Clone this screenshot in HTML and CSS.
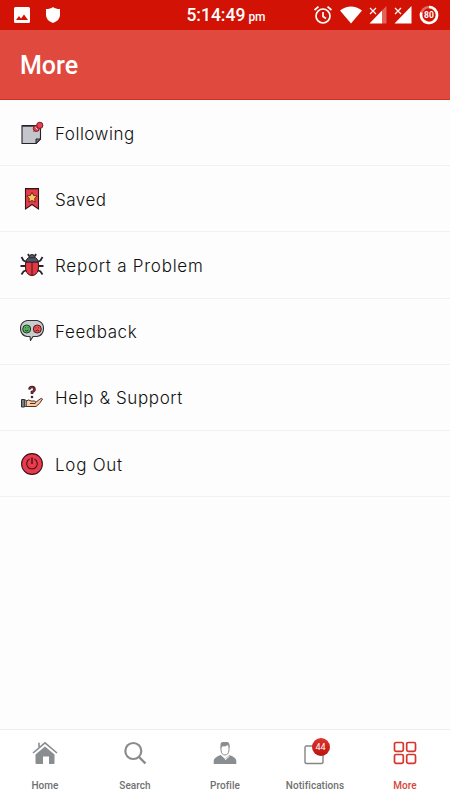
FILE: index.html
```
<!DOCTYPE html>
<html lang="en">
<head>
  <meta charset="UTF-8" />
  <title>More</title>
  <link rel="stylesheet" href="styles.css">
</head>
<body>
  <div class="status-bar">
    <div class="status-left">
      <svg width="18" height="18" viewBox="0 0 18 18"><path fill="#fff" fill-rule="evenodd" d="M2.500 1h13q1.500 0 1.500 1.500v13q0 1.500-1.500 1.500h-13q-1.500 0-1.500-1.500v-13Q1 1 2.500 1zM3 14h12l-4-5.500-3 4-2-2.500z"/></svg>
      <svg width="16" height="18" viewBox="0 0 16 18"><path fill="#fff" d="M8 1c2 1.500 4 2 7 2v5.500c0 4-2.500 7-7 8.500-4.500-1.500-7-4.500-7-8.500V3c3 0 5-.5 7-2z"/></svg>
    </div>
    <div class="clock"><span>5:14:49</span><small>pm</small></div>
    <div class="status-right">
      <svg width="20" height="20" viewBox="0 0 20 20" fill="none" stroke="#fff" stroke-width="1.700"><circle cx="10" cy="11" r="7"/><path d="M10 7v4.500l3 2M1.500 5l4-3.300M18.500 5l-4-3.300"/></svg>
      <svg width="22" height="18" viewBox="0 0 22 18"><path fill="#fff" d="M0 4.500Q11-3.500 22 4.500L11 17.500z"/></svg>
      <svg width="18" height="18" viewBox="0 0 18 18"><path fill="#fff" opacity=".35" d="M17.500 0v17.500H13V4.500z"/><path fill="#fff" d="M13 4.500v13H.5z"/><path d="M1 2l6 6M7 2L1 8" stroke="#fff" stroke-width="1.200"/></svg>
      <svg width="18" height="18" viewBox="0 0 18 18"><path fill="#fff" d="M17.500 0v17.500H.5z"/><path d="M1 2l6 6M7 2L1 8" stroke="#d11204" stroke-width="3"/><path d="M1 2l6 6M7 2L1 8" stroke="#fff" stroke-width="1.200"/></svg>
      <div class="battery">
        <svg width="20" height="20" viewBox="0 0 20 20" fill="none" stroke-width="2.600"><circle cx="10" cy="10" r="8" stroke="#e9685f"/><path d="M10 2a8 8 0 1 1-7.600 5.500" stroke="#fff"/></svg>
        <span>80</span>
      </div>
    </div>
  </div>

  <header class="header">More</header>

  <ul class="menu">
    <li>
      <svg width="24" height="24" viewBox="0 0 24 24">
        <path d="M2 4.500h18.500V18l-4.500 4.500H2z" fill="#c4c6cb" stroke="#24242a" stroke-width="1.100" stroke-linejoin="round"/>
        <path d="M2 5h12" stroke="#24242a" stroke-width="1.400"/>
        <path d="M20.500 18H16v4.500z" fill="#777a80" stroke="#24242a" stroke-linejoin="round"/>
        <path d="M13.500 10.500l3-3" stroke="#24242a"/>
        <circle cx="16.300" cy="7.500" r="3" fill="#e34350" stroke="#7b1924"/>
        <circle cx="19.800" cy="4.300" r="3.100" fill="#e34350" stroke="#7b1924"/>
        <path d="M15.500 6.500l2 2" stroke="#eee" stroke-width="1"/>
      </svg>
      <span class="following">Following</span>
    </li>
    <li>
      <svg width="24" height="24" viewBox="0 0 24 24">
        <path d="M5.500 1.500h13v20.500L12 17.500 5.500 22z" fill="#e63c49" stroke="#35151a" stroke-width="1.100"/>
        <path d="M5 1.700h14" stroke="#35151a" stroke-width="1.400"/>
        <path d="M12 5.300l1.600 3.200 3.600.5-2.600 2.500.6 3.600-3.200-1.700-3.200 1.700.6-3.600L6.800 9l3.600-.5z" fill="#ffc55c" stroke="#40201c" stroke-width=".8"/>
      </svg>
      <span class="saved">Saved</span>
    </li>
    <li>
      <svg width="24" height="24" viewBox="0 0 24 24">
        <path d="M7 9L3.500 7.500 1.500 4M17 9l3.500-1.500 2-3.500M6 13H.5M18 13h5.500M7 17l-3.500 1.500-2 3M17 17l3.500 1.500 2 3M9 3L8 1M15 3l1-2" fill="none" stroke="#282329" stroke-width="1.800"/>
        <path d="M5.800 9h12.400q1 4 0 8-1.700 5.500-6.200 5.500T5.800 17q-1-4 0-8z" fill="#e93643" stroke="#39151a"/>
        <path d="M5.800 9q.7-3.500 2.900-4.500.5-3 3.300-3t3.300 3q2.200 1 2.900 4.500z" fill="#515865" stroke="#25252d"/>
        <path d="M9 4.800h6M12 9v13" stroke="#2c2027"/>
      </svg>
      <span class="report">Report a Problem</span>
    </li>
    <li>
      <svg width="24" height="24" viewBox="0 0 24 24">
        <path d="M7 1.500h10q6.500 1.500 6.500 8t-6.500 8h-4l-2.500 4-.5-4H7Q.5 16 .5 9.500T7 1.500z" fill="#c9cccf" stroke="#333" stroke-width="1.100" stroke-linejoin="round"/>
        <circle cx="6.700" cy="10" r="4" fill="#50b75c" stroke="#193c20"/>
        <circle cx="17.300" cy="10" r="4" fill="#eb5055" stroke="#56161b"/>
        <path d="M5 8.800h.8M7.700 8.800h.8M15.500 8.800h.8M18.200 8.800h.8M5 11q1.700 2 3.400 0M15.600 12q1.700-2 3.400 0" stroke="#302426" stroke-width=".9" fill="none"/>
      </svg>
      <span class="feedback">Feedback</span>
    </li>
    <li>
      <svg width="24" height="24" viewBox="0 0 24 24">
        <path d="M9.500 4.500Q9.500 2 12 2t2.500 2.500q0 1.500-2.500 2.500v2" fill="none" stroke="#331d22" stroke-width="2.600"/>
        <path d="M9.500 4.300Q10 2 12 2t2.500 2.500q0 1.500-2.500 2.500v1.500" fill="none" stroke="#b52b3a"/>
        <circle cx="12" cy="12" r="1.300" fill="#4c252c"/>
        <path d="M6 16q3-2 5 0h3q2 0 1.500 1.500L20 14q2-1.200 2.500 0-2.500 5-6.500 7.500H6z" fill="#ffc9a0" stroke="#46342f" stroke-linejoin="round"/>
        <path d="M10 18.500h5.500" stroke="#46342f"/>
        <path d="M1.500 14.500h3V22h-3z" fill="#777b83" stroke="#303137"/>
        <path d="M4.500 15H6v6.500H4.500z" fill="#dadde2" stroke="#303137" stroke-width=".8"/>
      </svg>
      <span class="help">Help &amp; Support</span>
    </li>
    <li>
      <svg width="24" height="24" viewBox="0 0 24 24" fill="none" stroke="#3b141c">
        <circle cx="12" cy="12" r="10.400" fill="#ea3b4b" stroke-width="1.100"/>
        <path d="M9.500 7a5.300 5.300 0 1 0 5 0" stroke-width="1.100"/>
        <path d="M12 5.500V12" stroke-width="1.400"/>
      </svg>
      <span class="logout">Log Out</span>
    </li>
  </ul>

  <nav class="tabs">
    <div class="tab">
      <svg width="26" height="24" viewBox="0 0 26 24"><path fill="#898d90" d="M13 5.500l9.500 8V22q0 1-1 1H17v-7.500h-6V23H4.500q-1 0-1-1v-8.500z"/><path d="M1 12L13 1.800 25 12M7 6V1.800" fill="none" stroke="#898d90" stroke-width="1.600"/></svg>
      <span>Home</span>
    </div>
    <div class="tab">
      <svg width="24" height="24" viewBox="0 0 24 24" fill="none" stroke="#8b8b8b"><circle cx="10.300" cy="10" r="8" stroke-width="2.200"/><path d="M16 16l6.500 6.500" stroke-width="2.400"/></svg>
      <span>Search</span>
    </div>
    <div class="tab">
      <svg width="24" height="24" viewBox="0 0 24 24"><path fill="#8b8e91" d="M.7 23v-3q0-3.500 7-6l4.300 4 4.300-4q7 2.500 7 6v3z"/><path d="M8 5.500V9q.5 5 4 5t4-5V4" fill="#fff" stroke="#8b8e91"/><path fill="#8b8e91" d="M7.500 8V3q0-2 2.500-2h4q2.500 0 2.500 3.500V7q-1-1-1.500-3-2 1.500-6 1.500z"/><path d="M12 19l4.500-4" stroke="#fff"/></svg>
      <span>Profile</span>
    </div>
    <div class="tab">
      <svg width="24" height="24" viewBox="0 0 24 24"><rect x="2" y="5" width="18" height="17.500" rx="1.500" fill="none" stroke="#858585" stroke-width="1.400"/></svg>
      <b class="badge">44</b>
      <span>Notifications</span>
    </div>
    <div class="tab active">
      <svg width="24" height="24" viewBox="0 0 24 24" fill="none" stroke="#d6362d" stroke-width="1.700"><rect x="1.500" y="1.500" width="8.800" height="8.800" rx="1.600"/><rect x="13.700" y="1.500" width="8.800" height="8.800" rx="1.600"/><rect x="1.500" y="13.500" width="8.800" height="8.800" rx="1.600"/><rect x="13.700" y="13.500" width="8.800" height="8.800" rx="1.600"/></svg>
      <span>More</span>
    </div>
  </nav>
</body>
</html>
```
FILE: styles.css
```
* {
  box-sizing: border-box;
}

body {
  margin: 0;
  height: 800px;
  display: flex;
  flex-direction: column;
  background-color: #fdfdfd;
  font-family: Roboto, sans-serif;
  overflow: hidden;
}

svg {
  display: block;
  flex: none;
}

.status-bar {
  height: 30px;
  display: grid;
  grid-template-columns: 1fr auto 1fr;
  align-items: center;
  padding: 0 11px 0 13px;
  background-color: #d11204;
  color: #fff;
}

.status-left,
.status-right {
  display: flex;
  align-items: center;
}

.status-left {
  gap: 14px;
}

.status-right {
  justify-content: flex-end;
  gap: 7px;
}

.clock {
  display: flex;
  align-items: baseline;
  gap: 3px;
  font-size: 17.5px;
  font-weight: 500;
}

.clock small {
  font-size: 12px;
}

.battery {
  position: relative;
}

.battery span {
  position: absolute;
  inset: 0;
  font-size: 8.5px;
  font-weight: bold;
  line-height: 20px;
  text-align: center;
}

.header {
  height: 70px;
  padding: 2px 20px 0;
  border-bottom: 1px solid #d33025;
  background-color: #df493e;
  color: #fff;
  font-size: 25px;
  font-weight: 500;
  line-height: 68px;
}

.menu {
  flex: 1;
  margin: 0;
  padding: 0;
  list-style: none;
}

.menu li {
  height: 66.2px;
  display: flex;
  align-items: center;
  gap: 11px;
  padding-left: 20px;
  border-bottom: 1px solid #f1f1f1;
  color: #111;
  font-family: Inter, sans-serif;
  font-size: 17px;
  font-weight: 300;
}

.menu span {
  padding-top: 2px;
  letter-spacing: 0.6px;
}

.menu .following,
.menu .saved {
  letter-spacing: 0.5px;
}

.menu .report,
.menu .logout {
  letter-spacing: 0.75px;
}

.tabs {
  height: 71px;
  display: grid;
  grid-template-columns: repeat(5, 1fr);
  border-top: 1px solid #eee;
  background-color: #fff;
}

.tab {
  position: relative;
  display: flex;
  flex-direction: column;
  align-items: center;
  gap: 14px;
  padding-top: 11px;
  color: #707070;
  font-size: 10px;
  font-weight: 500;
  line-height: 14px;
  letter-spacing: 0.05px;
}

.active {
  color: #d6443b;
}

.badge {
  position: absolute;
  top: 8px;
  left: 41.500px;
  width: 18px;
  height: 18px;
  border-radius: 50%;
  background: linear-gradient(#e0352b, #b9150e);
  color: #fff;
  font-size: 9px;
  font-weight: 400;
  line-height: 18px;
  text-align: center;
}
```
